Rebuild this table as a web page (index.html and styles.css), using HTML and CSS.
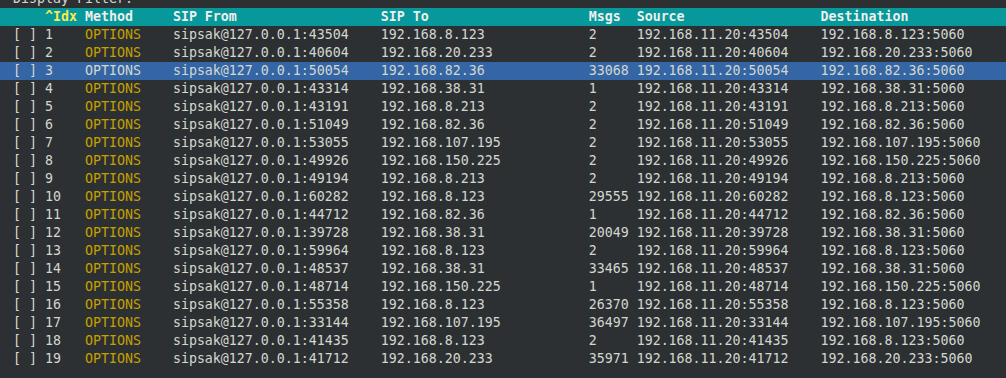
FILE: index.html
```html
<!DOCTYPE html>
<html lang="en">
<head>
    <meta charset="UTF-8">
    <title>sngrep - Call List</title>
    <link rel="stylesheet" href="styles.css">
</head>
<body>

    <div class="screen">
        <div class="line filter">Display Filter: </div>

        <div class="line head">
            <span class="c-chk"></span>
            <span class="c-idx sort">^Idx</span>
            <span class="c-method">Method</span>
            <span class="c-from">SIP From</span>
            <span class="c-to">SIP To</span>
            <span class="c-msgs">Msgs</span>
            <span class="c-src">Source</span>
            <span class="c-dst">Destination</span>
        </div>

        <div class="line"><span class="c-chk">[ ]</span><span class="c-idx">1</span><span class="c-method">OPTIONS</span><span class="c-from">sipsak@127.0.0.1:43504</span><span class="c-to">192.168.8.123</span><span class="c-msgs">2</span><span class="c-src">192.168.11.20:43504</span><span class="c-dst">192.168.8.123:5060</span></div>
        <div class="line"><span class="c-chk">[ ]</span><span class="c-idx">2</span><span class="c-method">OPTIONS</span><span class="c-from">sipsak@127.0.0.1:40604</span><span class="c-to">192.168.20.233</span><span class="c-msgs">2</span><span class="c-src">192.168.11.20:40604</span><span class="c-dst">192.168.20.233:5060</span></div>
        <div class="line selected"><span class="c-chk">[ ]</span><span class="c-idx">3</span><span class="c-method">OPTIONS</span><span class="c-from">sipsak@127.0.0.1:50054</span><span class="c-to">192.168.82.36</span><span class="c-msgs">33068</span><span class="c-src">192.168.11.20:50054</span><span class="c-dst">192.168.82.36:5060</span></div>
        <div class="line"><span class="c-chk">[ ]</span><span class="c-idx">4</span><span class="c-method">OPTIONS</span><span class="c-from">sipsak@127.0.0.1:43314</span><span class="c-to">192.168.38.31</span><span class="c-msgs">1</span><span class="c-src">192.168.11.20:43314</span><span class="c-dst">192.168.38.31:5060</span></div>
        <div class="line"><span class="c-chk">[ ]</span><span class="c-idx">5</span><span class="c-method">OPTIONS</span><span class="c-from">sipsak@127.0.0.1:43191</span><span class="c-to">192.168.8.213</span><span class="c-msgs">2</span><span class="c-src">192.168.11.20:43191</span><span class="c-dst">192.168.8.213:5060</span></div>
        <div class="line"><span class="c-chk">[ ]</span><span class="c-idx">6</span><span class="c-method">OPTIONS</span><span class="c-from">sipsak@127.0.0.1:51049</span><span class="c-to">192.168.82.36</span><span class="c-msgs">2</span><span class="c-src">192.168.11.20:51049</span><span class="c-dst">192.168.82.36:5060</span></div>
        <div class="line"><span class="c-chk">[ ]</span><span class="c-idx">7</span><span class="c-method">OPTIONS</span><span class="c-from">sipsak@127.0.0.1:53055</span><span class="c-to">192.168.107.195</span><span class="c-msgs">2</span><span class="c-src">192.168.11.20:53055</span><span class="c-dst">192.168.107.195:5060</span></div>
        <div class="line"><span class="c-chk">[ ]</span><span class="c-idx">8</span><span class="c-method">OPTIONS</span><span class="c-from">sipsak@127.0.0.1:49926</span><span class="c-to">192.168.150.225</span><span class="c-msgs">2</span><span class="c-src">192.168.11.20:49926</span><span class="c-dst">192.168.150.225:5060</span></div>
        <div class="line"><span class="c-chk">[ ]</span><span class="c-idx">9</span><span class="c-method">OPTIONS</span><span class="c-from">sipsak@127.0.0.1:49194</span><span class="c-to">192.168.8.213</span><span class="c-msgs">2</span><span class="c-src">192.168.11.20:49194</span><span class="c-dst">192.168.8.213:5060</span></div>
        <div class="line"><span class="c-chk">[ ]</span><span class="c-idx">10</span><span class="c-method">OPTIONS</span><span class="c-from">sipsak@127.0.0.1:60282</span><span class="c-to">192.168.8.123</span><span class="c-msgs">29555</span><span class="c-src">192.168.11.20:60282</span><span class="c-dst">192.168.8.123:5060</span></div>
        <div class="line"><span class="c-chk">[ ]</span><span class="c-idx">11</span><span class="c-method">OPTIONS</span><span class="c-from">sipsak@127.0.0.1:44712</span><span class="c-to">192.168.82.36</span><span class="c-msgs">1</span><span class="c-src">192.168.11.20:44712</span><span class="c-dst">192.168.82.36:5060</span></div>
        <div class="line"><span class="c-chk">[ ]</span><span class="c-idx">12</span><span class="c-method">OPTIONS</span><span class="c-from">sipsak@127.0.0.1:39728</span><span class="c-to">192.168.38.31</span><span class="c-msgs">20049</span><span class="c-src">192.168.11.20:39728</span><span class="c-dst">192.168.38.31:5060</span></div>
        <div class="line"><span class="c-chk">[ ]</span><span class="c-idx">13</span><span class="c-method">OPTIONS</span><span class="c-from">sipsak@127.0.0.1:59964</span><span class="c-to">192.168.8.123</span><span class="c-msgs">2</span><span class="c-src">192.168.11.20:59964</span><span class="c-dst">192.168.8.123:5060</span></div>
        <div class="line"><span class="c-chk">[ ]</span><span class="c-idx">14</span><span class="c-method">OPTIONS</span><span class="c-from">sipsak@127.0.0.1:48537</span><span class="c-to">192.168.38.31</span><span class="c-msgs">33465</span><span class="c-src">192.168.11.20:48537</span><span class="c-dst">192.168.38.31:5060</span></div>
        <div class="line"><span class="c-chk">[ ]</span><span class="c-idx">15</span><span class="c-method">OPTIONS</span><span class="c-from">sipsak@127.0.0.1:48714</span><span class="c-to">192.168.150.225</span><span class="c-msgs">1</span><span class="c-src">192.168.11.20:48714</span><span class="c-dst">192.168.150.225:5060</span></div>
        <div class="line"><span class="c-chk">[ ]</span><span class="c-idx">16</span><span class="c-method">OPTIONS</span><span class="c-from">sipsak@127.0.0.1:55358</span><span class="c-to">192.168.8.123</span><span class="c-msgs">26370</span><span class="c-src">192.168.11.20:55358</span><span class="c-dst">192.168.8.123:5060</span></div>
        <div class="line"><span class="c-chk">[ ]</span><span class="c-idx">17</span><span class="c-method">OPTIONS</span><span class="c-from">sipsak@127.0.0.1:33144</span><span class="c-to">192.168.107.195</span><span class="c-msgs">36497</span><span class="c-src">192.168.11.20:33144</span><span class="c-dst">192.168.107.195:5060</span></div>
        <div class="line"><span class="c-chk">[ ]</span><span class="c-idx">18</span><span class="c-method">OPTIONS</span><span class="c-from">sipsak@127.0.0.1:41435</span><span class="c-to">192.168.8.123</span><span class="c-msgs">2</span><span class="c-src">192.168.11.20:41435</span><span class="c-dst">192.168.8.123:5060</span></div>
        <div class="line"><span class="c-chk">[ ]</span><span class="c-idx">19</span><span class="c-method">OPTIONS</span><span class="c-from">sipsak@127.0.0.1:41712</span><span class="c-to">192.168.20.233</span><span class="c-msgs">35971</span><span class="c-src">192.168.11.20:41712</span><span class="c-dst">192.168.20.233:5060</span></div>
    </div>

</body>
</html>
```

FILE: styles.css
```css
* {
    box-sizing: border-box;
}
html, body {
    height: 100%;
}
body {
    margin: 0;
    padding: 0;
    background-color: #2d3033;
    color: #d3d7cf;
    font-family: 'DejaVu Sans Mono', monospace;
    font-size: 13.29px;
    overflow: hidden;
}
/* first line of the terminal is scrolled half out of view */
.screen {
    margin-top: -10px;
}
.line {
    display: flex;
    height: 18px;
    line-height: 18px;
    padding-left: 13px;
    white-space: pre;
}
.line span {
    flex: none;
    overflow: hidden;
}
.filter {
    color: #d3d7cf;
}
.head {
    background-color: #06989a;
    color: #eeeeec;
    font-weight: bold;
}
.head .sort {
    color: #fce94f;
}
.selected {
    background-color: #3465a4;
}
.c-chk {
    width: 4ch;
}
.c-idx {
    width: 5ch;
}
.c-method {
    width: 11ch;
    color: #c4a000;
}
.head .c-method,
.selected .c-method {
    color: inherit;
}
.c-from, .c-to {
    width: 26ch;
}
.c-msgs {
    width: 6ch;
}
.c-src {
    width: 23ch;
}
```
